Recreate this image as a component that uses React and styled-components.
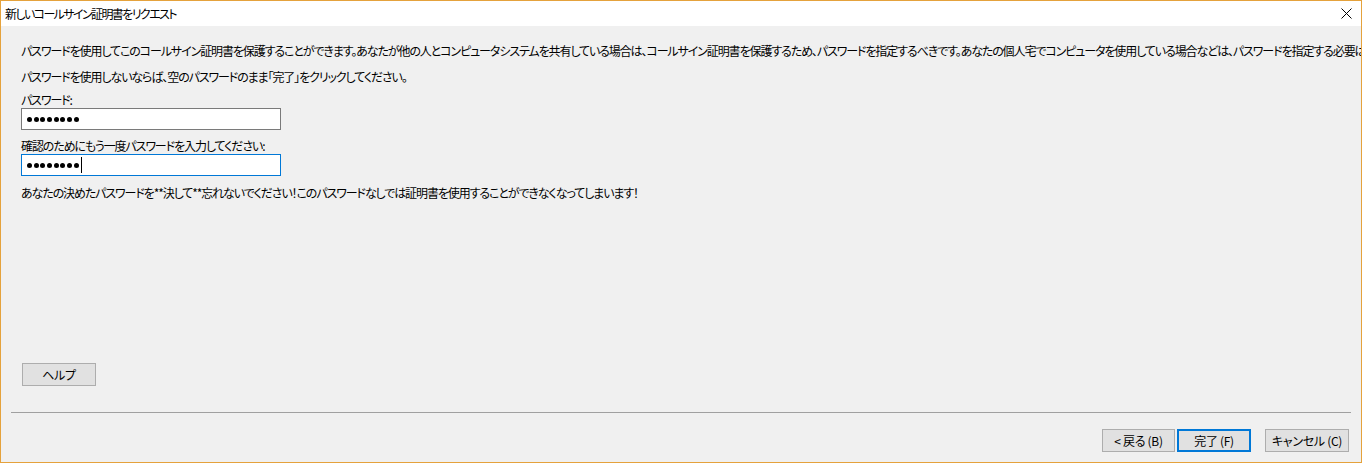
import React from 'react';
import styled, { createGlobalStyle } from 'styled-components';

const GlobalStyle = createGlobalStyle`
  html, body {
    margin: 0;
    padding: 0;
    height: 100%;
    overflow: hidden;
  }
  #root {
    height: 100%;
  }
  body {
    font-family: "Noto Sans CJK JP", "Noto Sans", sans-serif;
    font-size: 12px;
    color: #000;
  }
`;

const Window = styled.div`
  box-sizing: border-box;
  height: 463px;
  width: 1362px;
  border: 1px solid #e5a23c;
  display: flex;
  flex-direction: column;
  background: #f0f0f0;
  font-feature-settings: "palt";
  letter-spacing: -1.1px;
`;

const TitleBar = styled.div`
  height: 25px;
  flex-shrink: 0;
  background: #fff;
  display: flex;
  align-items: center;
  justify-content: space-between;
  padding: 0 0 0 4px;
`;

const Title = styled.span`
  font-size: 12px;
  line-height: 25px;
  letter-spacing: -1.6px;
`;

const CloseButton = styled.div`
  width: 46px;
  height: 25px;
  display: flex;
  align-items: center;
  justify-content: center;
  margin-right: -8px;
`;

const Body = styled.div`
  flex: 1;
  display: flex;
  flex-direction: column;
`;

const Content = styled.div`
  padding: 12px 0 0 20px;
  flex: 1;
  overflow: hidden;
`;

const Paragraph = styled.p`
  margin: 0;
  line-height: 26px;
  white-space: nowrap;
`;

const Label = styled.div`
  line-height: 16px;
  margin-top: ${({ $gap }) => $gap}px;
`;

const PasswordBox = styled.div`
  box-sizing: border-box;
  width: 260px;
  height: 22px;
  background: #fff;
  border: 1px solid ${({ $focused }) => ($focused ? '#0078d7' : '#7a7a7a')};
  display: flex;
  align-items: center;
  padding-left: 5px;
  gap: 1.7px;
`;

const Dot = styled.span`
  width: 5px;
  height: 5px;
  border-radius: 50%;
  background: #000;
  flex-shrink: 0;
`;

const Caret = styled.span`
  width: 1px;
  height: 16px;
  background: #000;
`;

const Note = styled.p`
  margin: 9px 0 0;
  line-height: 16px;
`;

const Footer = styled.div`
  display: flex;
  flex-direction: column;
  padding-bottom: 10px;
`;

const HelpRow = styled.div`
  padding-left: 21px;
`;

const Button = styled.button`
  box-sizing: border-box;
  width: ${({ $w }) => $w}px;
  height: 23px;
  padding: 0;
  background: #e1e1e1;
  border: ${({ $primary }) => ($primary ? '2px solid #0078d7' : '1px solid #adadad')};
  font-family: inherit;
  font-size: 12px;
  font-feature-settings: "palt";
  letter-spacing: -0.3px;
  color: #000;
  cursor: default;
`;

const Separator = styled.hr`
  margin: 26px 10px 0 10px;
  border: none;
  border-top: 1px solid #a0a0a0;
  height: 0;
`;

const ButtonRow = styled.div`
  display: flex;
  justify-content: flex-end;
  gap: 2px;
  margin-top: 16px;
  padding-right: 12px;
`;

const Spacer = styled.div`
  width: 10px;
`;

const Dots = ({ count }) =>
  Array.from({ length: count }).map((_, i) => <Dot key={i} />);

export default function App() {
  return (
    <>
      <GlobalStyle />
      <Window>
        <TitleBar>
          <Title>新しいコールサイン証明書をリクエスト</Title>
          <CloseButton>
            <svg width="11" height="11" viewBox="0 0 11 11">
              <path d="M0.5 0.5L10.5 10.5M10.5 0.5L0.5 10.5" stroke="#000" strokeWidth="1" />
            </svg>
          </CloseButton>
        </TitleBar>
        <Body>
          <Content>
            <Paragraph>
              パスワードを使用してこのコールサイン証明書を保護することができます。あなたが他の人とコンピュータシステムを共有している場合は、コールサイン証明書を保護するため、パスワードを指定するべきです。あなたの個人宅でコンピュータを使用している場合などは、パスワードを指定する必要はありません。
            </Paragraph>
            <Paragraph>
              パスワードを使用しないならば、空のパスワードのまま「完了」をクリックしてください。
            </Paragraph>
            <Label $gap={2}>パスワード:</Label>
            <PasswordBox>
              <Dots count={8} />
            </PasswordBox>
            <Label $gap={8}>確認のためにもう一度パスワードを入力してください:</Label>
            <PasswordBox $focused>
              <Dots count={8} />
              <Caret />
            </PasswordBox>
            <Note>
              あなたの決めたパスワードを**決して**忘れないでください！このパスワードなしでは証明書を使用することができなくなってしまいます！
            </Note>
          </Content>
          <Footer>
            <HelpRow>
              <Button $w={74}>ヘルプ</Button>
            </HelpRow>
            <Separator />
            <ButtonRow>
              <Button $w={73}>&lt; 戻る (B)</Button>
              <Button $w={74} $primary>完了 (F)</Button>
              <Spacer />
              <Button $w={84}>キャンセル (C)</Button>
            </ButtonRow>
          </Footer>
        </Body>
      </Window>
    </>
  );
}
